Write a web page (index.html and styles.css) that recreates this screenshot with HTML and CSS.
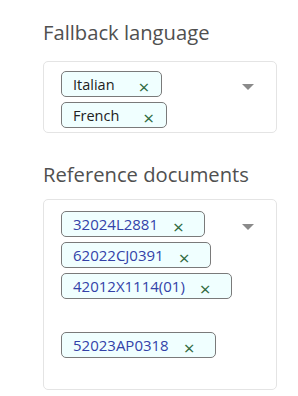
FILE: index.html
```html
<!DOCTYPE html>
<html lang="en">
<head>
  <meta charset="UTF-8" />
  <meta name="viewport" content="width=device-width, initial-scale=1.0"/>
  <title>Settings</title>
  <link rel="stylesheet" href="styles.css">
</head>
<body>

  <h2 class="field-label first">Fallback language</h2>
  <div class="select select-lang">
    <div class="chips">
      <span class="chip">Italian<span class="chip-x">×</span></span>
      <span class="chip">French<span class="chip-x">×</span></span>
    </div>
    <span class="arrow"></span>
  </div>

  <h2 class="field-label">Reference documents</h2>
  <div class="select select-docs">
    <div class="chips">
      <span class="chip doc">32024L2881<span class="chip-x">×</span></span>
      <span class="chip doc">62022CJ0391<span class="chip-x">×</span></span>
      <span class="chip doc">42012X1114(01)<span class="chip-x">×</span></span>
      <span class="chip-break"></span>
      <span class="chip doc">52023AP0318<span class="chip-x">×</span></span>
    </div>
    <span class="arrow"></span>
  </div>

</body>
</html>
```

FILE: styles.css
```css
body {
  margin: 0;
  padding: 0 21px 0 43px;
  font-family: 'Open Sans', 'Noto Sans', sans-serif;
  background: #fff;
}

.field-label {
  margin: 26px 0 10px;
  font-size: 20.2px;
  line-height: 30px;
  font-weight: normal;
  color: #505050;
}

.field-label.first {
  margin: 17px 0 14px;
}

.select {
  display: flex;
  align-items: flex-start;
  border: 1px solid #e4e4e4;
  border-radius: 5px;
  padding: 9px 22px 4px 17px;
}

.select-docs {
  padding-top: 11px;
  padding-bottom: 31px;
}

.chips {
  flex: 1;
  display: flex;
  flex-direction: column;
  align-items: flex-start;
  gap: 5px;
}

.chip {
  display: inline-flex;
  align-items: center;
  height: 24px;
  border: 1px solid #7a7a7a;
  border-radius: 5px;
  background: #f0ffff;
  padding: 0 12px 0 11px;
  font-size: 14.5px;
  color: #222;
}

.chip-x {
  margin-left: 24px;
  margin-top: 7px;
  font-size: 19px;
  line-height: 1;
  color: #2f6b3f;
}

.chip.doc {
  font-size: 15px;
  color: #3342a8;
  padding-right: 20px;
}

.chip.doc .chip-x {
  margin-left: 15px;
}

.chip-break {
  height: 23px;
}

.arrow {
  margin-top: 13px;
  width: 0;
  height: 0;
  border-left: 6px solid transparent;
  border-right: 6px solid transparent;
  border-top: 6px solid #8a8a8a;
}
```
